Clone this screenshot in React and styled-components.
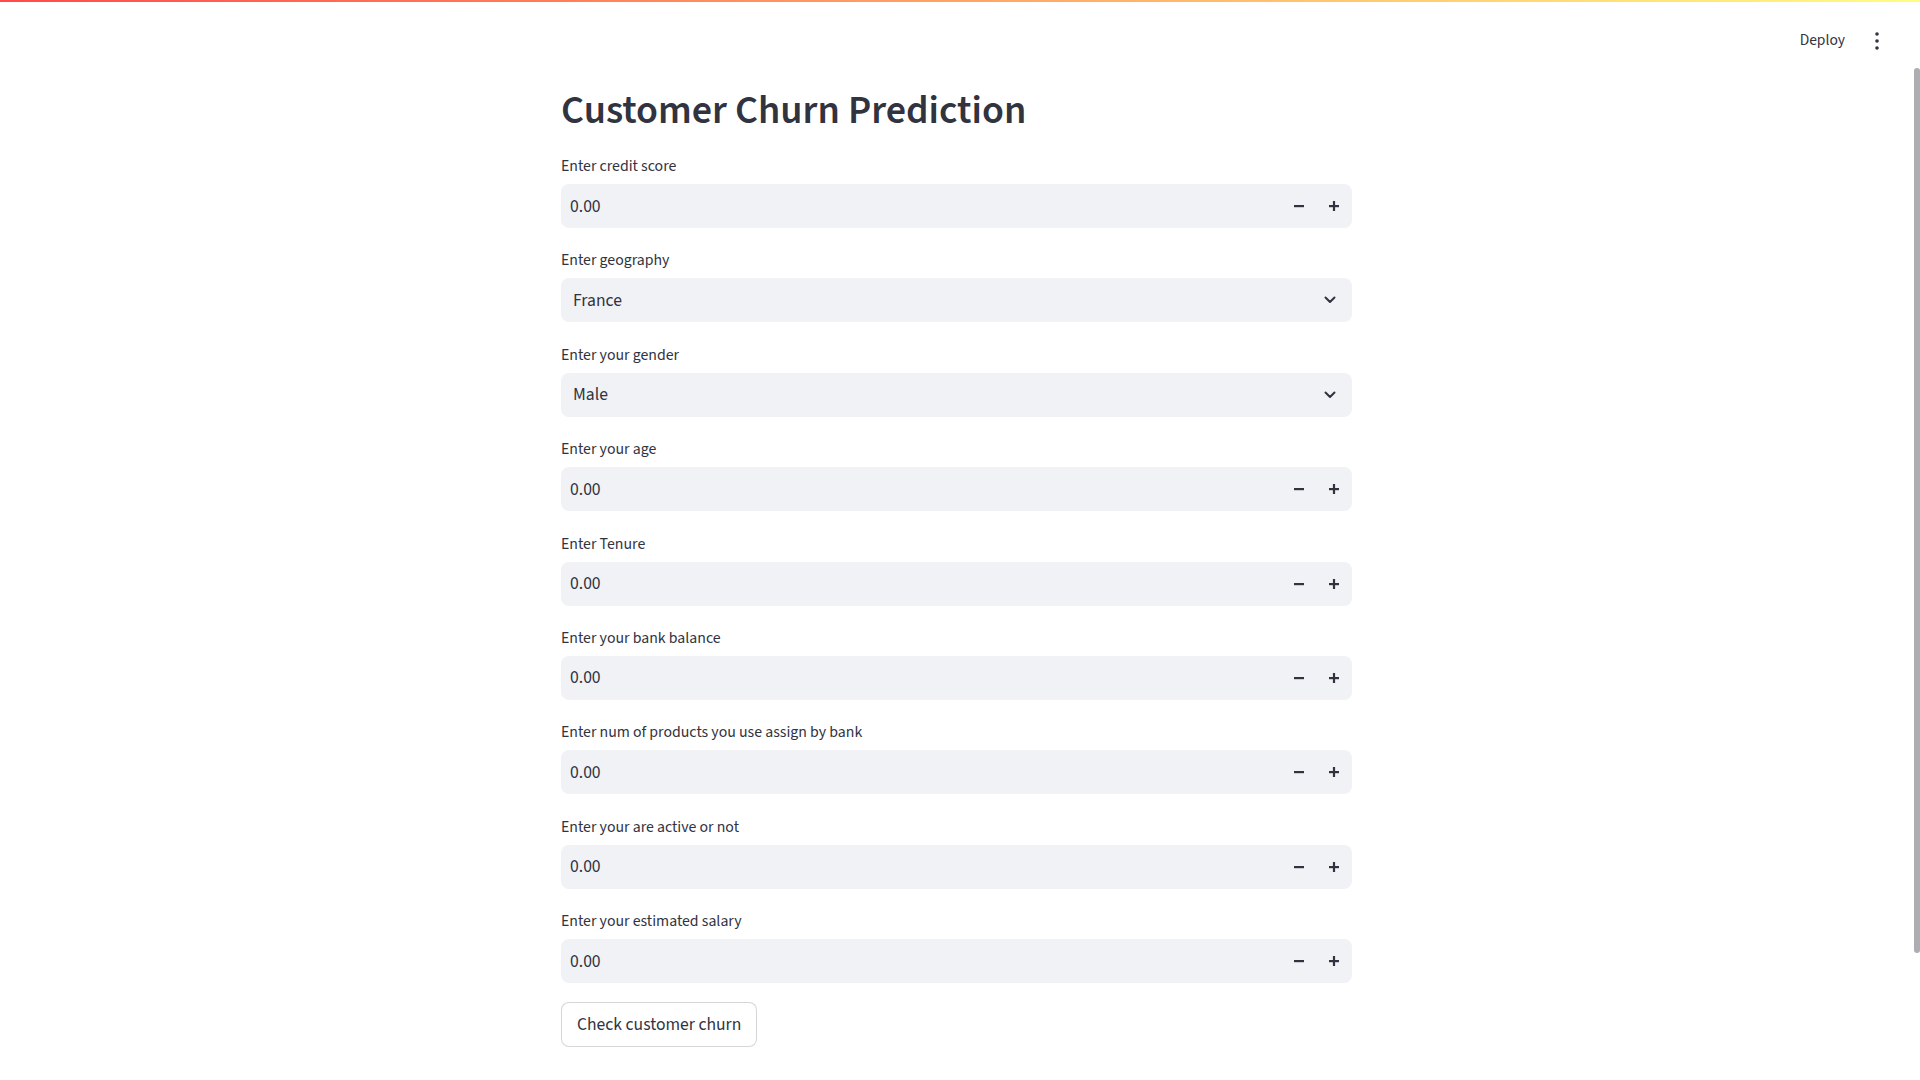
import styled, { createGlobalStyle } from 'styled-components';

const GlobalStyle = createGlobalStyle`
  html, body {
    margin: 0;
    padding: 0;
    background: #ffffff;
    overflow: hidden;
  }
  body {
    font-family: "Source Sans Pro", "Source Sans 3", Lato, "Noto Sans", sans-serif;
    color: #31333f;
  }
  * {
    box-sizing: border-box;
  }
`;

const fields = [
    { label: 'Enter credit score' },
    { label: 'Enter geography', options: 'France' },
    { label: 'Enter your gender', options: 'Male' },
    { label: 'Enter your age' },
    { label: 'Enter Tenure' },
    { label: 'Enter your bank balance' },
    { label: 'Enter num of products you use assign by bank' },
    { label: 'Enter your are active or not' },
    { label: 'Enter your estimated salary' },
];

const MinusIcon = () => (
    <svg width="10" height="10" viewBox="0 0 10 10">
        <rect x="0" y="4" width="10" height="2.2" fill="#31333f" />
    </svg>
);

const PlusIcon = () => (
    <svg width="10" height="10" viewBox="0 0 10 10">
        <rect x="0" y="4" width="10" height="2.2" fill="#31333f" />
        <rect x="3.9" y="0" width="2.2" height="10" fill="#31333f" />
    </svg>
);

const ChevronIcon = () => (
    <svg width="12" height="8" viewBox="0 0 12 8">
        <polyline points="1.5,1.5 6,6 10.5,1.5" fill="none" stroke="#31333f" strokeWidth="2" strokeLinecap="round" strokeLinejoin="round" />
    </svg>
);

const KebabIcon = () => (
    <svg width="24" height="24" viewBox="0 0 24 24">
        <circle cx="12" cy="5" r="1.8" fill="#31333f" />
        <circle cx="12" cy="12" r="1.8" fill="#31333f" />
        <circle cx="12" cy="19" r="1.8" fill="#31333f" />
    </svg>
);

const App = () => {
    return (
        <Page>
            <GlobalStyle />
            <Header>
                <Decoration />
                <Toolbar>
                    <DeployButton>Deploy</DeployButton>
                    <MenuButton><KebabIcon /></MenuButton>
                </Toolbar>
            </Header>
            <Main>
                <Block>
                    <Title>Customer Churn Prediction</Title>
                    <Form>
                        {fields.map((f, idx) => (
                            <Field key={idx}>
                                <Label>{f.label}</Label>
                                {f.options ? (
                                    <SelectBox>
                                        <SelectValue>{f.options}</SelectValue>
                                        <ChevronIcon />
                                    </SelectBox>
                                ) : (
                                    <NumberBox>
                                        <NumberValue>0.00</NumberValue>
                                        <StepButton><MinusIcon /></StepButton>
                                        <StepButton><PlusIcon /></StepButton>
                                    </NumberBox>
                                )}
                            </Field>
                        ))}
                        <SubmitButton>Check customer churn</SubmitButton>
                    </Form>
                </Block>
            </Main>
            <ScrollThumb />
        </Page>
    )
}

export default App

const Page = styled.div`
    width: 1920px;
    height: 1080px;
    display: flex;
    flex-direction: column;
`;

const Header = styled.header`
    display: flex;
    flex-direction: column;
`;

const Decoration = styled.div`
    height: 2px;
    background: linear-gradient(90deg, #ff4b4b, #fffd80);
`;

const Toolbar = styled.div`
    height: 77px;
    display: flex;
    align-items: center;
    justify-content: flex-end;
    padding-right: 31px;
    gap: 20px;
`;

const DeployButton = styled.div`
    font-size: 15.5px;
    color: #31333f;
    line-height: 22px;
    margin-bottom: 2px;
`;

const MenuButton = styled.div`
    width: 24px;
    height: 24px;
    display: flex;
`;

const Main = styled.main`
    flex: 1;
    display: flex;
    justify-content: center;
    padding-right: 7px;
    padding-top: 4px;
`;

const Block = styled.div`
    width: 791px;
    display: flex;
    flex-direction: column;
`;

const Title = styled.h1`
    margin: 0 0 15px 0;
    font-size: 40px;
    line-height: 56px;
    font-weight: 600;
    color: #31333f;
`;

const Form = styled.div`
    display: flex;
    flex-direction: column;
    gap: 20.4px;
    align-items: flex-start;
`;

const Field = styled.div`
    width: 100%;
    display: flex;
    flex-direction: column;
    gap: 6px;
`;

const Label = styled.label`
    font-size: 15.8px;
    line-height: 24px;
    color: #31333f;
`;

const NumberBox = styled.div`
    height: 44px;
    background: #f0f2f6;
    border-radius: 8px;
    display: flex;
    align-items: center;
    padding-right: 1px;
`;

const NumberValue = styled.div`
    flex: 1;
    padding-left: 9px;
    font-size: 17.6px;
    color: #31333f;
`;

const StepButton = styled.div`
    width: 35px;
    height: 100%;
    display: flex;
    align-items: center;
    justify-content: center;
`;

const SelectBox = styled.div`
    height: 44px;
    background: #f0f2f6;
    border-radius: 8px;
    display: flex;
    align-items: center;
    justify-content: space-between;
    padding: 0 16px 0 12px;
`;

const SelectValue = styled.div`
    font-size: 17.6px;
    color: #31333f;
`;

const SubmitButton = styled.button`
    height: 45px;
    margin-top: -2px;
    padding: 0 15px;
    background: #ffffff;
    border: 1px solid rgba(49, 51, 63, 0.2);
    border-radius: 8px;
    font-family: inherit;
    font-size: 17.6px;
    color: #31333f;
`;

const ScrollThumb = styled.div`
    position: fixed;
    right: 0;
    top: 68px;
    width: 6px;
    height: 885px;
    background: #adadb2;
    border-radius: 3px;
`;
